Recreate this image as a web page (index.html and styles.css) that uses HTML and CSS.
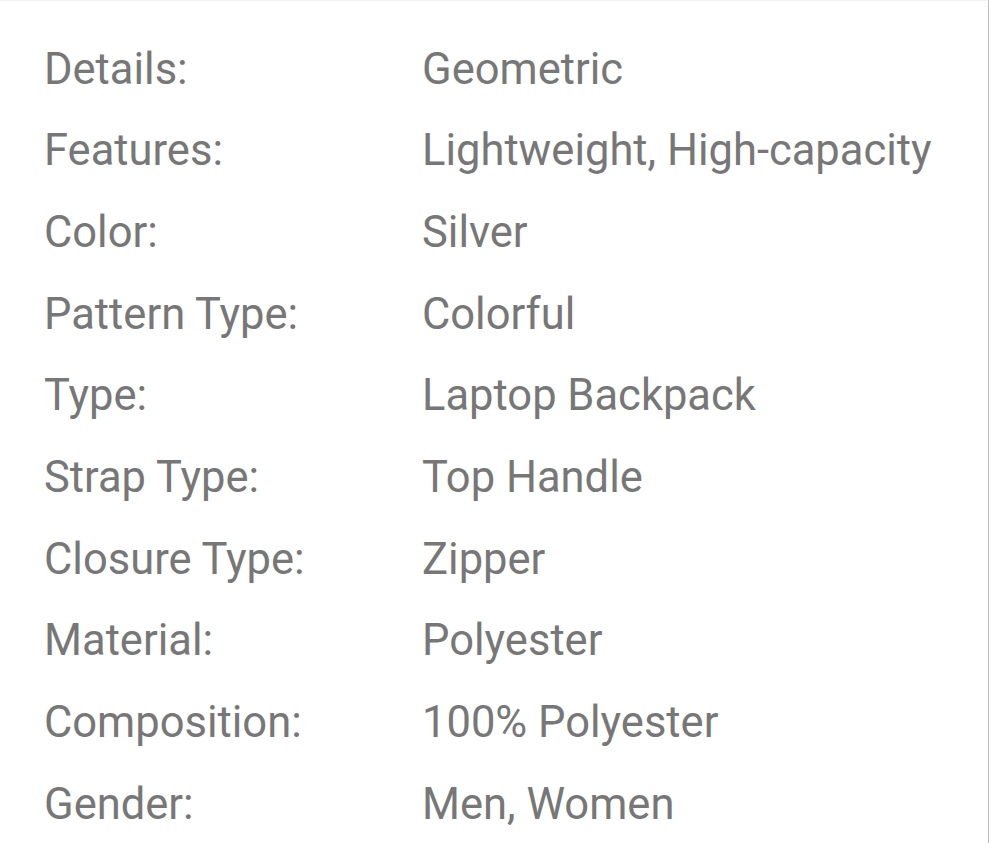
FILE: index.html
```html
<!DOCTYPE html>
<html>
<head>
<meta charset="utf-8">
<link rel="stylesheet" href="styles.css">
</head>
<body>
<div class="panel">
  <dl class="specs">
    <dt>Details:</dt><dd>Geometric</dd>
    <dt>Features:</dt><dd>Lightweight, High-capacity</dd>
    <dt>Color:</dt><dd>Silver</dd>
    <dt>Pattern Type:</dt><dd>Colorful</dd>
    <dt>Type:</dt><dd>Laptop Backpack</dd>
    <dt>Strap Type:</dt><dd>Top Handle</dd>
    <dt>Closure Type:</dt><dd>Zipper</dd>
    <dt>Material:</dt><dd>Polyester</dd>
    <dt>Composition:</dt><dd>100% Polyester</dd>
    <dt>Gender:</dt><dd>Men, Women</dd>
  </dl>
</div>
</body>
</html>
```

FILE: styles.css
```css
html, body {
  margin: 0;
  padding: 0;
  background: #fff;
}
.panel {
  box-sizing: border-box;
  width: 989px;
  height: 843px;
  border-top: 1px solid #f3f3f3;
  border-right: 1px solid #bdbdbd;
  padding: 27.5px 0 0 44px;
  overflow: hidden;
}
.specs {
  margin: 0;
  display: grid;
  grid-template-columns: 378px 1fr;
  font-family: Roboto, "Liberation Sans", sans-serif;
  font-size: 43.5px;
  line-height: 81.7px;
  color: #777;
}
.specs dt, .specs dd {
  margin: 0;
  white-space: nowrap;
}
```
